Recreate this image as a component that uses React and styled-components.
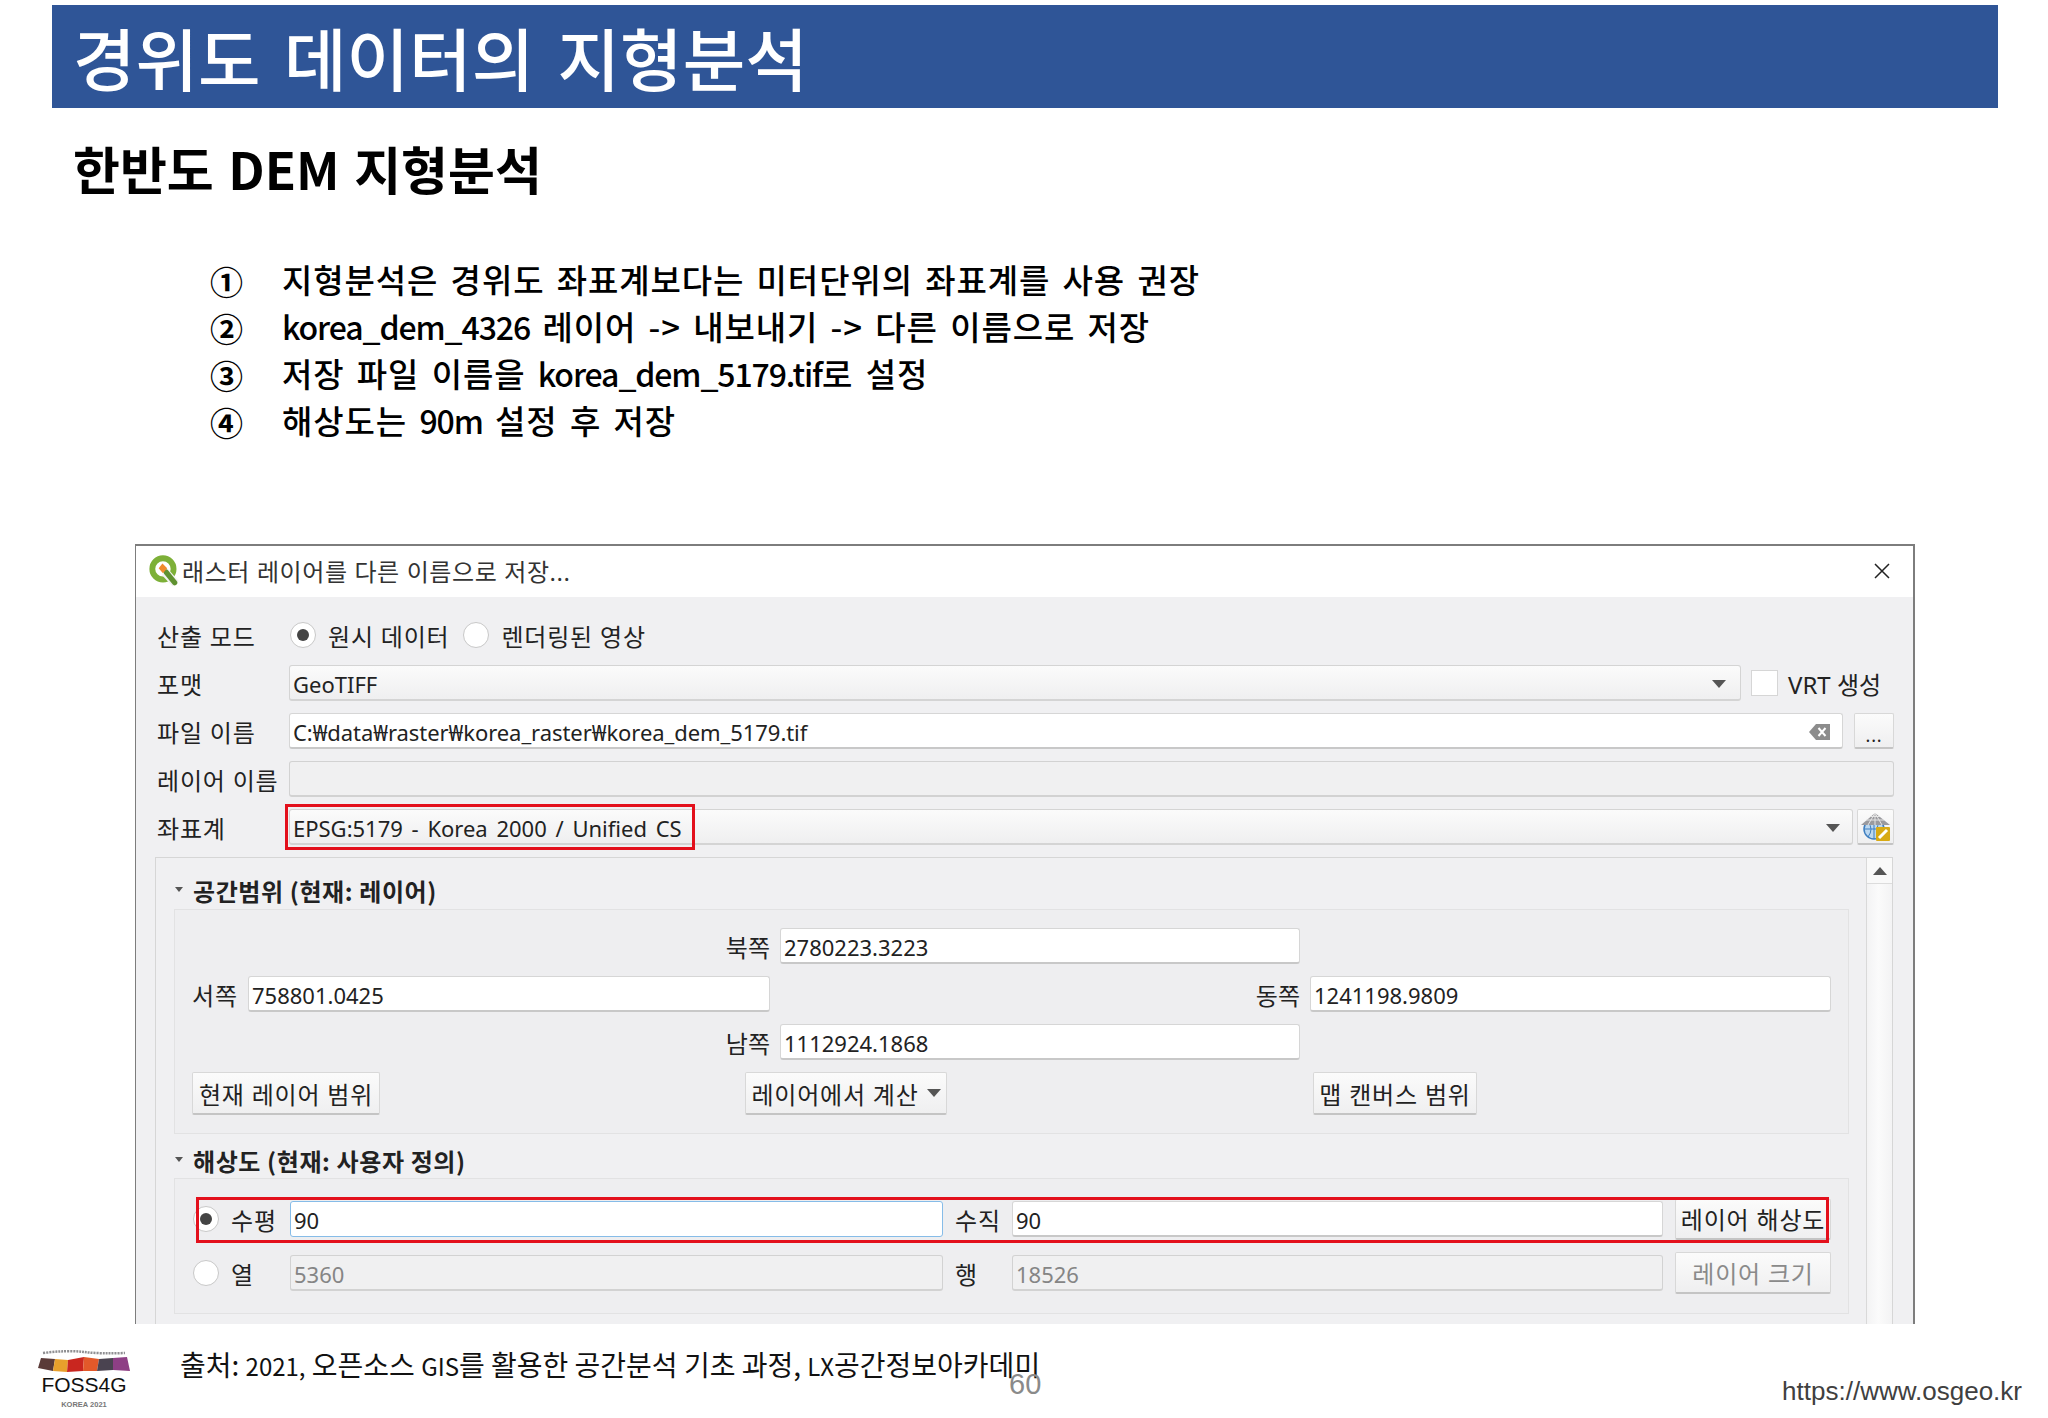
import React from 'react';
import styled, { createGlobalStyle } from 'styled-components';

const GlobalStyle = createGlobalStyle`
  html, body {
    margin: 0;
    padding: 0;
    background: #fff;
  }
  * {
    box-sizing: border-box;
  }
`;

const KR = `"Noto Sans", "Noto Sans CJK KR", sans-serif`;
const SLIDE = `"Noto Sans CJK KR", "Noto Sans", sans-serif`;

// Slide
const Page = styled.div`
  position: relative;
  width: 2048px;
  height: 1418px;
  overflow: hidden;
  background: #fff;
  font-family: ${SLIDE};
  color: #000;
`;

const Banner = styled.header`
  margin: 5px 50px 0 52px;
  height: 103px;
  padding-left: 21px;
  display: flex;
  align-items: center;
  background: #2f5597;
`;

const Title = styled.h1`
  margin: 0;
  font-size: 68px;
  font-weight: 500;
  word-spacing: 8px;
  line-height: 1;
  color: #fff;
`;

const Subtitle = styled.h2`
  margin: 30px 0 0 73px;
  font-size: 51px;
  line-height: 60px;
  font-weight: 700;
  word-spacing: 3px;
`;

const Steps = styled.ol`
  list-style: none;
  margin: 58px 0 0 210px;
  padding: 0;
`;

const Step = styled.li`
  display: grid;
  grid-template-columns: 72px 1fr;
  grid-template-rows: 47px;
  align-items: center;
  height: 47px;
  font-size: 33px;
  line-height: 47px;
  font-weight: 500;
  letter-spacing: 0.9px;
  word-spacing: 4px;
`;

const Bullet = styled.span`
  margin-top: 3px;
  line-height: 1;
  font-size: 33px;
  font-weight: 700;
  letter-spacing: 0;
`;

const Latin = styled.span`
  font-size: 32px;
  letter-spacing: -1.1px;
`;

// Dialog
const Dialog = styled.section`
  margin: 100px 0 0 135px;
  width: 1780px;
  height: 780px;
  overflow: hidden;
  border: 2px solid #7d7d7d;
  border-bottom: none;
  border-width: 2px 2px 0 1px;
  background: #f0f0f2;
  color: #222;
  font-family: ${KR};
`;

const TitleBar = styled.div`
  height: 51px;
  padding: 0 23px 2px 11px;
  display: flex;
  align-items: center;
  background: #fff;
  font-size: 24px;
  letter-spacing: 0.6px;
  color: #333;
`;

const TitleText = styled.span`
  flex: 1;
  margin-left: 1px;
`;

const Form = styled.div`
  padding: 20px 19px 0 21px;
`;

const FormRow = styled.div`
  display: grid;
  grid-template-columns: 132px 1fr;
  align-items: center;
  height: 36px;
  margin-bottom: 12px;
`;

const RowContent = styled.div`
  display: flex;
  align-items: center;
  min-width: 0;
`;

const Label = styled.span`
  font-size: 24px;
  letter-spacing: 0.8px;
  white-space: nowrap;
  color: #222;
`;

const Radio = styled.span`
  width: 26px;
  height: 26px;
  flex: none;
  border-radius: 50%;
  border: 1px solid #c8c8c8;
  background: #fff;
  display: flex;
  align-items: center;
  justify-content: center;
  &::after {
    content: '';
    display: ${(p) => (p.$on ? 'block' : 'none')};
    width: 12px;
    height: 12px;
    border-radius: 50%;
    background: #444;
  }
`;

const RadioGroup = styled.div`
  display: flex;
  align-items: center;
  margin-left: 1px;
  gap: 12px;
  & > ${Label} {
    margin-right: 2px;
  }
`;

const Box = styled.div`
  position: relative;
  height: ${(p) => p.$h || 36}px;
  flex: 1;
  min-width: 0;
  padding: 2px 3px 0;
  display: flex;
  align-items: center;
  border: 1px solid #d6d6d6;
  border-bottom: 2px solid #c8c8c8;
  border-radius: 3px;
  font-size: 22px;
  white-space: nowrap;
`;

const Combo = styled(Box)`
  background: linear-gradient(#fbfbfb, #efeff0);
  border-color: #d4d4d4;
  justify-content: space-between;
  word-spacing: 3px;
`;

const Field = styled(Box)`
  background: #fff;
  color: #222;
`;

const FocusField = styled(Field)`
  border: 1px solid #86bce8;
`;

const DisabledField = styled(Box)`
  background: #f0f0f1;
  color: #858585;
  border-color: #d2d2d2;
`;

const FieldText = styled.span`
  flex: 1;
  letter-spacing: -0.06px;
`;

const Caret = styled.span`
  width: 0;
  height: 0;
  flex: none;
  margin-right: ${(p) => p.$mr ?? 9}px;
  border-left: 7.5px solid transparent;
  border-right: 7.5px solid transparent;
  border-top: 8px solid #555;
`;

const Check = styled.span`
  width: 27px;
  height: 26px;
  margin: 0 10px 0 10px;
  flex: none;
  background: #fff;
  border: 1px solid #d6d6d6;
`;

const VrtLabel = styled(Label)`
  letter-spacing: 0;
  width: 106px;
`;

const Button = styled.button`
  height: ${(p) => p.$h || 43}px;
  width: ${(p) => (p.$w ? `${p.$w}px` : 'auto')};
  padding: 0;
  font-family: ${KR};
  font-size: 24px;
  letter-spacing: 0.8px;
  color: ${(p) => (p.disabled ? '#8a8a8a' : '#222')};
  white-space: nowrap;
  background: linear-gradient(#fbfbfb, #efeff0);
  border: 1px solid #d8d8d8;
  border-bottom: 2px solid #c4c4c4;
  border-radius: 2px;
  display: inline-flex;
  align-items: center;
  justify-content: center;
`;

const SquareButton = styled(Button)`
  flex: none;
  margin-left: ${(p) => p.$ml}px;
  padding-top: ${(p) => p.$pt || 0}px;
  font-size: 18px;
`;

const Highlight = styled.div`
  position: absolute;
  left: ${(p) => p.$l}px;
  top: ${(p) => p.$t}px;
  width: ${(p) => p.$w}px;
  height: ${(p) => p.$h}px;
  border: 3px solid #e3101c;
  pointer-events: none;
`;

const Scroller = styled.div`
  margin: 0 0 0 -2px;
  height: 480px;
  width: 1738px;
  display: grid;
  grid-template-columns: 1fr 26px;
  border: 1px solid #d6d6d6;
  border-bottom: none;
`;

const ScrollContent = styled.div`
  padding: 0 17px 0 18px;
`;

const ScrollTrack = styled.div`
  border-left: 1px solid #d9d9d9;
  background: linear-gradient(90deg, #f3f3f4, #fbfbfb 45%, #f3f3f4);
`;

const ScrollUp = styled.div`
  height: 26px;
  background: #f9f9f9;
  border-bottom: 1px solid #dcdcdc;
  display: flex;
  align-items: center;
  justify-content: center;
  &::after {
    content: '';
    border-left: 7px solid transparent;
    border-right: 7px solid transparent;
    border-bottom: 8px solid #555;
  }
`;

const SectionHead = styled.div`
  display: flex;
  align-items: center;
  gap: 10px;
  height: ${(p) => p.$h}px;
  padding-left: 1px;
  padding-top: ${(p) => p.$pt || 0}px;
  font-family: ${SLIDE};
  font-size: 24px;
  font-weight: 700;
  letter-spacing: 0.6px;
  color: #222;
`;

const Tri = styled.span`
  width: 0;
  height: 0;
  margin-top: -2px;
  border-left: 4px solid transparent;
  border-right: 4px solid transparent;
  border-top: 5px solid #555;
`;

const Panel = styled.div`
  border: 1px solid #e2e2e3;
  background: #eeeef0;
  padding: ${(p) => p.$pad};
`;

const ExtentGrid = styled.div`
  display: grid;
  grid-template-columns: 578px 520px 521px;
  column-gap: 10px;
  row-gap: 12px;
  align-items: center;
`;

const RightLabel = styled(Label)`
  grid-column: ${(p) => p.$col};
  justify-self: end;
  letter-spacing: 0;
`;

const WestCell = styled.div`
  grid-column: 1;
  display: grid;
  grid-template-columns: 56px 1fr;
  align-items: center;
`;

const ExtentButtons = styled.div`
  display: grid;
  grid-template-columns: 553px 568px auto;
  margin-top: 12px;
  justify-items: start;
`;

const MenuButton = styled(Button)`
  gap: 8px;
`;

const ResWrap = styled.div`
  position: relative;
  display: grid;
  grid-template-columns: 97px 653px 69px 651px 168px;
  grid-auto-rows: 42px;
  row-gap: 12px;
  align-items: center;
  & > button {
    justify-self: end;
  }
`;

const RadioCell = styled.div`
  display: flex;
  align-items: center;
  gap: 12px;
`;

const ResLabel = styled(Label)`
  margin-left: 12px;
`;

// Footer
const Footer = styled.footer`
  position: relative;
  height: 94px;
  padding-left: 37px;
  display: flex;
  align-items: flex-start;
`;

const Logo = styled.div`
  width: 94px;
  margin-top: 26px;
  display: flex;
  flex-direction: column;
  align-items: center;
  font-family: "Liberation Sans", sans-serif;
`;

const LogoName = styled.div`
  font-size: 21px;
  line-height: 24px;
  margin-top: -1px;
  color: #111;
`;

const LogoSub = styled.div`
  font-size: 7.5px;
  line-height: 10px;
  margin-top: 3px;
  font-weight: 700;
  color: #777;
`;

const Source = styled.div`
  margin: 20px 0 0 49px;
  font-size: 28px;
  line-height: 40px;
  white-space: nowrap;
  color: #111;
`;

const SmallLatin = styled.span`
  font-size: 24px;
`;

const PageNo = styled.div`
  position: absolute;
  left: 1009px;
  top: 44px;
  font-family: "Liberation Sans", sans-serif;
  font-size: 29px;
  color: #8a8a8a;
`;

const Url = styled.div`
  position: absolute;
  right: 26px;
  top: 52px;
  font-family: "Liberation Sans", sans-serif;
  font-size: 26px;
  color: #404040;
`;

// Drawings
const QgisIcon = () => (
  <svg width="34" height="34" viewBox="0 0 32 32">
    <circle cx="15" cy="14" r="10" fill="none" stroke="#7db038" strokeWidth="5.5" />
    <path d="M17 17 L27 28" stroke="#f2f2f2" strokeWidth="8" />
    <path d="M18 17 L26 27" stroke="#5f9130" strokeWidth="5" strokeLinecap="round" />
    <path d="M14.5 9 L19 13.5 L15 18 L11 13.5 Z" fill="#ef8a2c" />
  </svg>
);

const CloseIcon = () => (
  <svg width="16" height="16" viewBox="0 0 16 16">
    <path d="M1 1 L15 15 M15 1 L1 15" stroke="#222" strokeWidth="1.5" />
  </svg>
);

const ClearIcon = () => (
  <svg width="21" height="16" viewBox="0 0 21 16" style={{ flex: 'none', marginRight: 9 }}>
    <path d="M7 0 H21 V16 H7 L0 8 Z" fill="#8c8c8c" />
    <path d="M9.5 4 L16.5 12 M16.5 4 L9.5 12" stroke="#fff" strokeWidth="2" />
  </svg>
);

const GlobeIcon = () => (
  <svg width="30" height="30" viewBox="0 0 30 30">
    <circle cx="13" cy="17" r="10" fill="#bcd8f0" stroke="#3f7fc0" strokeWidth="1.5" />
    <path d="M3 17 H23 M13 7 V27 M7 10 Q13 17 7 25 M19 10 Q13 17 19 25" fill="none" stroke="#3f7fc0" strokeWidth="1" />
    <path d="M14 1 L29 13 H0 Z" fill="#9a9a9e" />
    <path d="M14 1 L7 13 M14 1 L21 13 M14 1 V13 M5 8 H23 M9 4.5 H19" stroke="#e4e4e4" strokeWidth="1" fill="none" />
    <rect x="15" y="15" width="14" height="14" rx="1" fill="#d8aa14" />
    <path d="M18 26 L26 18" stroke="#fff" strokeWidth="3" />
  </svg>
);

const LogoMark = () => (
  <svg width="94" height="24" viewBox="0 0 94 24">
    <path d="M6 3 Q30 0 47 2 T88 3" fill="none" stroke="#8f8f92" strokeWidth="2.5" strokeDasharray="2 1" />
    <path d="M4 8 L18 9 L16 21 L1 18 Z" fill="#5a3a38" />
    <path d="M18 9 L31 10 L30 22 L16 21 Z" fill="#e8a02c" />
    <path d="M31 10 L47 7 L46 21 L30 22 Z" fill="#c9261f" />
    <path d="M47 7 L62 9 L60 21 L46 21 Z" fill="#e2592a" />
    <path d="M62 9 L76 8 L76 20 L60 21 Z" fill="#4a4350" />
    <path d="M76 8 L90 7 L93 21 L76 20 Z" fill="#8e3f85" />
  </svg>
);

const App = () => (
  <Page>
    <GlobalStyle />
    <Banner>
      <Title>경위도 데이터의 지형분석</Title>
    </Banner>
    <Subtitle>한반도 DEM 지형분석</Subtitle>
    <Steps>
      <Step><Bullet>①</Bullet><span>지형분석은 경위도 좌표계보다는 미터단위의 좌표계를 사용 권장</span></Step>
      <Step><Bullet>②</Bullet><span><Latin>korea_dem_4326</Latin> 레이어 -&gt; 내보내기 -&gt; 다른 이름으로 저장</span></Step>
      <Step><Bullet>③</Bullet><span>저장 파일 이름을 <Latin>korea_dem_5179.tif</Latin>로 설정</span></Step>
      <Step><Bullet>④</Bullet><span>해상도는 <Latin>90m</Latin> 설정 후 저장</span></Step>
    </Steps>

    <Dialog>
      <TitleBar>
        <QgisIcon />
        <TitleText>래스터 레이어를 다른 이름으로 저장...</TitleText>
        <CloseIcon />
      </TitleBar>
      <Form>
        <FormRow>
          <Label>산출 모드</Label>
          <RadioGroup>
            <Radio $on />
            <Label>원시 데이터</Label>
            <Radio />
            <Label>렌더링된 영상</Label>
          </RadioGroup>
        </FormRow>
        <FormRow>
          <Label>포맷</Label>
          <RowContent>
            <Combo>
              GeoTIFF
              <Caret $mr={11} />
            </Combo>
            <Check />
            <VrtLabel>VRT 생성</VrtLabel>
          </RowContent>
        </FormRow>
        <FormRow>
          <Label>파일 이름</Label>
          <RowContent>
            <Field>
              <FieldText>C:₩data₩raster₩korea_raster₩korea_dem_5179.tif</FieldText>
              <ClearIcon />
            </Field>
            <SquareButton $w={40} $h={36} $ml={11} $pt={8}>...</SquareButton>
          </RowContent>
        </FormRow>
        <FormRow>
          <Label>레이어 이름</Label>
          <DisabledField />
        </FormRow>
        <FormRow>
          <Label>좌표계</Label>
          <RowContent>
            <Combo>
              EPSG:5179 - Korea 2000 / Unified CS
              <Caret />
              <Highlight $l={-5} $t={-6} $w={410} $h={46} />
            </Combo>
            <SquareButton $w={37} $h={36} $ml={4}>
              <GlobeIcon />
            </SquareButton>
          </RowContent>
        </FormRow>

        <Scroller>
          <ScrollContent>
            <SectionHead $h={51} $pt={13}>
              <Tri />
              공간범위 (현재: 레이어)
            </SectionHead>
            <Panel $pad="18px 17px 18px 17px">
              <ExtentGrid>
                <RightLabel $col={1}>북쪽</RightLabel>
                <Field>2780223.3223</Field>
                <WestCell>
                  <Label>서쪽</Label>
                  <Field>758801.0425</Field>
                </WestCell>
                <RightLabel $col={2}>동쪽</RightLabel>
                <Field>1241198.9809</Field>
                <RightLabel $col={1}>남쪽</RightLabel>
                <Field>1112924.1868</Field>
              </ExtentGrid>
              <ExtentButtons>
                <Button $w={188}>현재 레이어 범위</Button>
                <MenuButton $w={202}>
                  레이어에서 계산
                  <Caret $mr={0} />
                </MenuButton>
                <Button $w={164}>맵 캔버스 범위</Button>
              </ExtentButtons>
            </Panel>
            <SectionHead $h={44} $pt={9}>
              <Tri />
              해상도 (현재: 사용자 정의)
            </SectionHead>
            <Panel $pad="19px 17px 19px 18px">
              <ResWrap>
                <RadioCell>
                  <Radio $on />
                  <Label>수평</Label>
                </RadioCell>
                <FocusField>90</FocusField>
                <ResLabel>수직</ResLabel>
                <Field>90</Field>
                <Button $w={156} $h={41}>레이어 해상도</Button>
                <RadioCell>
                  <Radio />
                  <Label>열</Label>
                </RadioCell>
                <DisabledField>5360</DisabledField>
                <ResLabel>행</ResLabel>
                <DisabledField>18526</DisabledField>
                <Button $w={156} $h={42} disabled>레이어 크기</Button>
                <Highlight $l={3} $t={-1} $w={1633} $h={46} />
              </ResWrap>
            </Panel>
          </ScrollContent>
          <ScrollTrack>
            <ScrollUp />
          </ScrollTrack>
        </Scroller>
      </Form>
    </Dialog>

    <Footer>
      <Logo>
        <LogoMark />
        <LogoName>FOSS4G</LogoName>
        <LogoSub>KOREA 2021</LogoSub>
      </Logo>
      <Source>출처: <SmallLatin>2021,</SmallLatin> 오픈소스 <SmallLatin>GIS</SmallLatin>를 활용한 공간분석 기초 과정, <SmallLatin>LX</SmallLatin>공간정보아카데미</Source>
      <PageNo>60</PageNo>
      <Url>https://www.osgeo.kr</Url>
    </Footer>
  </Page>
);

export default App;
